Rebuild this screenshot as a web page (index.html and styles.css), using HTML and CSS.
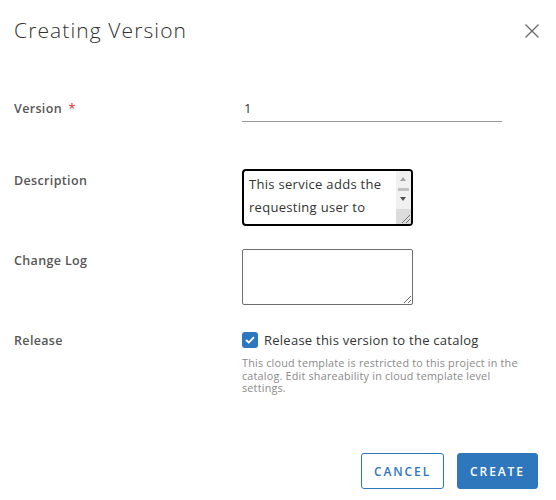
FILE: index.html
```html
<!DOCTYPE html>
<html>
<head>
<meta charset="utf-8">
<link rel="stylesheet" href="styles.css">
</head>
<body>
<div class="modal">
  <div class="header">
    <h1 class="title">Creating Version</h1>
    <button class="close" aria-label="Close">
      <svg width="16" height="16" viewBox="0 0 16 16"><path d="M1.5 1.5 L14.5 14.5 M14.5 1.5 L1.5 14.5" stroke="#6a6a6a" stroke-width="1.3" fill="none"/></svg>
    </button>
  </div>
  <div class="form">
    <div class="row row-version">
      <label class="label">Version <span class="req">*</span></label>
      <div class="control"><input class="text-input" type="text" value="1"></div>
    </div>
    <div class="row row-desc">
      <label class="label">Description</label>
      <div class="control">
        <div class="area-wrap">
          <textarea class="area area-focus">This service adds the
requesting user to
a group in the directory.</textarea>
          <div class="fake-scroll">
            <span class="arrow-up"></span>
            <span class="thumb"></span>
            <span class="arrow-down"></span>
            <span class="corner"></span>
          </div>
        </div>
      </div>
    </div>
    <div class="row row-log">
      <label class="label">Change Log</label>
      <div class="control"><textarea class="area"></textarea></div>
    </div>
    <div class="row row-release">
      <label class="label">Release</label>
      <div class="control">
        <div class="check-line">
          <span class="checkbox"><svg width="10" height="8" viewBox="0 0 10 8"><path d="M1 4 L3.8 6.6 L9 1.2" stroke="#fff" stroke-width="1.8" fill="none"/></svg></span>
          <span class="check-text">Release this version to the catalog</span>
        </div>
        <p class="helper">This cloud template is restricted to this project in the catalog. Edit shareability in cloud template level settings.</p>
      </div>
    </div>
  </div>
  <div class="footer">
    <button class="btn btn-outline">CANCEL</button>
    <button class="btn btn-primary">CREATE</button>
  </div>
</div>
</body>
</html>
```
FILE: styles.css
```css
* { box-sizing: border-box; }
html, body { margin: 0; padding: 0; background: #fff; }
body { font-family: "Open Sans", "Noto Sans", sans-serif; color: #333; width: 556px; height: 500px; overflow: hidden; }
.modal { display: flex; flex-direction: column; height: 500px; }
.header { display: flex; justify-content: space-between; align-items: flex-start; padding: 16px 16px 0 14px; height: 96px; }
.title { margin: 0; font-size: 21px; font-weight: 300; color: #313131; line-height: 28px; letter-spacing: 1.1px; }
.close { border: none; background: none; padding: 0; margin-top: 7px; width: 16px; height: 16px; display: flex; }
.form { display: flex; flex-direction: column; }
.row { display: grid; grid-template-columns: 228px 1fr; padding-left: 14px; }
.label { font-size: 12.5px; font-weight: 600; color: #565656; line-height: 20px; letter-spacing: 0.35px; }
.req { color: #d9534f; font-weight: 600; margin-left: 3px; }
.row-version .label { padding-top: 3px; }
.text-input { width: 260px; height: 25px; border: none; border-bottom: 1px solid #9a9a9a; font: inherit; font-size: 13px; color: #333; padding: 0 0 2px 2px; outline: none; background: transparent; }
.row-desc { margin-top: 47px; }
.row-desc .label { padding-top: 2px; }
.area-wrap { position: relative; width: 171px; height: 57px; }
.area { display: block; width: 171px; height: 56px; border: 1px solid #6f6f6f; border-radius: 2px; font: inherit; font-size: 13px; line-height: 23px; color: #333; padding: 3px 6px; resize: vertical; outline: none; letter-spacing: 0.3px; }
.area-focus { border: 2px solid #000; border-radius: 4px; padding: 2px 20px 2px 5px; height: 57px; overflow: hidden; resize: none; white-space: pre; }
.fake-scroll { position: absolute; top: 2px; right: 2px; bottom: 2px; width: 15px; background: #f1f1f1; border-radius: 0 2px 2px 0; overflow: hidden; }
.arrow-up { position: absolute; left: 4px; top: 6px; width: 0; height: 0; border-left: 3.5px solid transparent; border-right: 3.5px solid transparent; border-bottom: 4px solid #a3a3a3; }
.thumb { position: absolute; left: 2px; right: 2px; top: 17px; height: 3px; background: #c1c1c1; }
.arrow-down { position: absolute; left: 4px; top: 26px; width: 0; height: 0; border-left: 3.5px solid transparent; border-right: 3.5px solid transparent; border-top: 4px solid #505050; }
.corner { position: absolute; left: 0; right: 0; bottom: 0; height: 15px; background: #dcdcdc; }
.corner::after { content: ""; position: absolute; right: 1px; bottom: 1px; width: 8px; height: 8px; background: linear-gradient(135deg, transparent 45%, #777 45%, #777 53%, transparent 53%, transparent 70%, #777 70%, #777 78%, transparent 78%); }
.row-log { margin-top: 23px; }
.row-log .label { padding-top: 2px; }
.row-release { margin-top: 26px; }
.row-release .label { padding-top: 0; }
.check-line { display: flex; align-items: center; height: 16px; margin-top: 1px; }
.checkbox { width: 16px; height: 16px; border-radius: 3px; background: #2f77bd; display: flex; align-items: center; justify-content: center; }
.check-text { margin-left: 6px; font-size: 13px; color: #333; letter-spacing: 0.25px; }
.helper { margin: 9px 0 0; font-size: 10.8px; line-height: 12.5px; color: #8a8a8a; width: 285px; letter-spacing: 0.2px; }
.footer { margin-top: auto; display: flex; justify-content: flex-end; gap: 13px; padding: 0 18px 11px 0; }
.btn { height: 36px; border-radius: 3px; font-family: inherit; font-size: 12px; font-weight: 600; letter-spacing: 1.9px; padding: 0; }
.btn-outline { width: 83px; background: #fff; border: 1px solid #2f77bd; color: #2f77bd; }
.btn-primary { width: 81px; background: #2f77bd; border: 1px solid #2f77bd; color: #fff; }
```
